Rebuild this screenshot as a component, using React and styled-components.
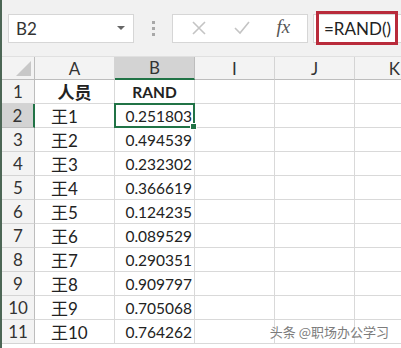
import React from 'react';
import styled, { createGlobalStyle } from 'styled-components';

const GlobalStyle = createGlobalStyle`
	html, body {
		margin: 0;
		padding: 0;
		background: #ffffff;
		overflow: hidden;
	}
	* {
		box-sizing: border-box;
	}
`;

const Window = styled.div`
	position: relative;
	width: 401px;
	height: 348px;
	overflow: hidden;
	border-left: 2px solid #4c6655;
	font-family: Lato, 'Noto Sans CJK SC', sans-serif;
	color: #222;
`;

const Toolbar = styled.div`
	height: 57px;
	display: flex;
	align-items: center;
	padding: 0 0 0 6px;
	background: #f1f1f1;
	border-bottom: 1px solid #e0e0e0;
`;

const NameBox = styled.div`
	width: 126px;
	height: 29px;
	display: flex;
	align-items: center;
	justify-content: space-between;
	padding: 0 8px 0 7px;
	background: #fff;
	border: 1px solid #d6d6d6;
	font-size: 17px;
	color: #333;
`;

const Caret = styled.span`
	width: 0;
	height: 0;
	border-left: 4px solid transparent;
	border-right: 4px solid transparent;
	border-top: 4px solid #666;
`;

const Grip = styled.div`
	width: 38px;
	display: flex;
	flex-direction: column;
	align-items: center;
	gap: 3px;

	span {
		width: 3px;
		height: 3px;
		background: #a8a8a8;
	}
`;

const FuncBox = styled.div`
	width: 136px;
	height: 29px;
	display: flex;
	align-items: center;
	justify-content: space-around;
	padding: 0 4px;
	background: #fff;
	border: 1px solid #d6d6d6;
`;

const Fx = styled.span`
	font-family: 'Liberation Serif', serif;
	font-style: italic;
	font-size: 19px;
	color: #555;
	margin-top: -2px;
`;

const FormulaInput = styled.div`
	flex: 1;
	height: 29px;
	margin-left: 5px;
	display: flex;
	align-items: center;
	background: #fff;
	border-top: 1px solid #d6d6d6;
	border-bottom: 1px solid #d6d6d6;
	border-left: 1px solid #d6d6d6;
`;

const Highlight = styled.div`
	height: 34px;
	margin-left: 2px;
	padding: 0 4px 0 5px;
	display: flex;
	align-items: center;
	border: 3px solid #b92b3b;
	font-size: 17px;
	color: #222;
`;

const Grid = styled.div`
	display: grid;
	grid-template-columns: 33px repeat(5, 80px);
	grid-template-rows: 23px;
	grid-auto-rows: 24px;
`;

const Cell = styled.div`
	display: flex;
	align-items: center;
	justify-content: ${p => p.align || 'flex-start'};
	padding: ${p => (p.align === 'flex-end' ? '0 2px 0 0' : p.align === 'center' ? '0' : '0 0 0 16px')};
	border-right: 1px solid #d9d9d9;
	border-bottom: 1px solid #d9d9d9;
	font-size: ${p => (p.cjk ? '17px' : '15.5px')};
	font-weight: ${p => (p.bold ? 700 : 400)};
	background: #fff;
	white-space: nowrap;
`;

const ColHead = styled.div`
	display: flex;
	align-items: center;
	justify-content: center;
	background: ${p => (p.active ? '#d3d3d3' : '#f3f3f3')};
	border-right: 1px solid ${p => (p.active ? '#bdbdbd' : '#d4d4d4')};
	border-bottom: ${p => (p.active ? '2px solid #217346' : '1px solid #bdbdbd')};
	font-size: 17px;
	color: #333;
`;

const Corner = styled.div`
	position: relative;
	background: #f3f3f3;
	border-right: 1px solid #bdbdbd;
	border-bottom: 1px solid #bdbdbd;

	&::after {
		content: '';
		position: absolute;
		right: 3px;
		bottom: 3px;
		border-left: 15px solid transparent;
		border-bottom: 15px solid #c8c8c8;
	}
`;

const RowHead = styled.div`
	display: flex;
	align-items: center;
	justify-content: center;
	background: ${p => (p.active ? '#d3d3d3' : '#f3f3f3')};
	border-right: ${p => (p.active ? '2px solid #217346' : '1px solid #bdbdbd')};
	border-bottom: 1px solid ${p => (p.active ? '#bdbdbd' : '#d4d4d4')};
	font-size: 17px;
	color: #333;
`;

const Selected = styled(Cell)`
	position: relative;
	border: 2px solid #217346;
	margin: -1px 0 0 -1px;
	padding-right: 1px;

	&::after {
		content: '';
		position: absolute;
		right: -4px;
		bottom: -4px;
		width: 5px;
		height: 5px;
		background: #217346;
		border: 1px solid #fff;
	}
`;

const Watermark = styled.div`
	position: absolute;
	right: 12px;
	bottom: 7px;
	font-family: 'Noto Sans CJK SC', sans-serif;
	font-size: 13px;
	color: #666;
	text-shadow: 0 0 2px #fff, 0 0 2px #fff;
	opacity: 0.85;
`;

const values = [
	'0.251803', '0.494539', '0.232302', '0.366619', '0.124235',
	'0.089529', '0.290351', '0.909797', '0.705068', '0.764262',
];

const columns = ['A', 'B', 'I', 'J', 'K'];

const App = () => (
	<Window>
		<GlobalStyle />
		<Toolbar>
			<NameBox>
				B2
				<Caret />
			</NameBox>
			<Grip>
				<span />
				<span />
				<span />
			</Grip>
			<FuncBox>
				<svg width="18" height="18" viewBox="0 0 18 18">
					<path d="M3 3 L15 15 M15 3 L3 15" stroke="#c4c4c4" strokeWidth="1.6" fill="none" />
				</svg>
				<svg width="18" height="18" viewBox="0 0 18 18">
					<path d="M2 9 L7 14 L16 3" stroke="#c4c4c4" strokeWidth="1.6" fill="none" />
				</svg>
				<Fx>fx</Fx>
			</FuncBox>
			<FormulaInput>
				<Highlight>=RAND()</Highlight>
			</FormulaInput>
		</Toolbar>
		<Grid>
			<Corner />
			{columns.map(c => (
				<ColHead key={c} active={c === 'B'}>{c}</ColHead>
			))}
			<RowHead>1</RowHead>
			<Cell align="center" bold cjk>人员</Cell>
			<Cell align="center" bold>RAND</Cell>
			<Cell />
			<Cell />
			<Cell />
			{values.map((v, i) => (
				<React.Fragment key={i}>
					<RowHead active={i === 0}>{i + 2}</RowHead>
					<Cell cjk>王{i + 1}</Cell>
					{i === 0 ? <Selected align="flex-end">{v}</Selected> : <Cell align="flex-end">{v}</Cell>}
					<Cell />
					<Cell />
					<Cell />
				</React.Fragment>
			))}
		</Grid>
		<Watermark>头条 @职场办公学习</Watermark>
	</Window>
);

export default App;
